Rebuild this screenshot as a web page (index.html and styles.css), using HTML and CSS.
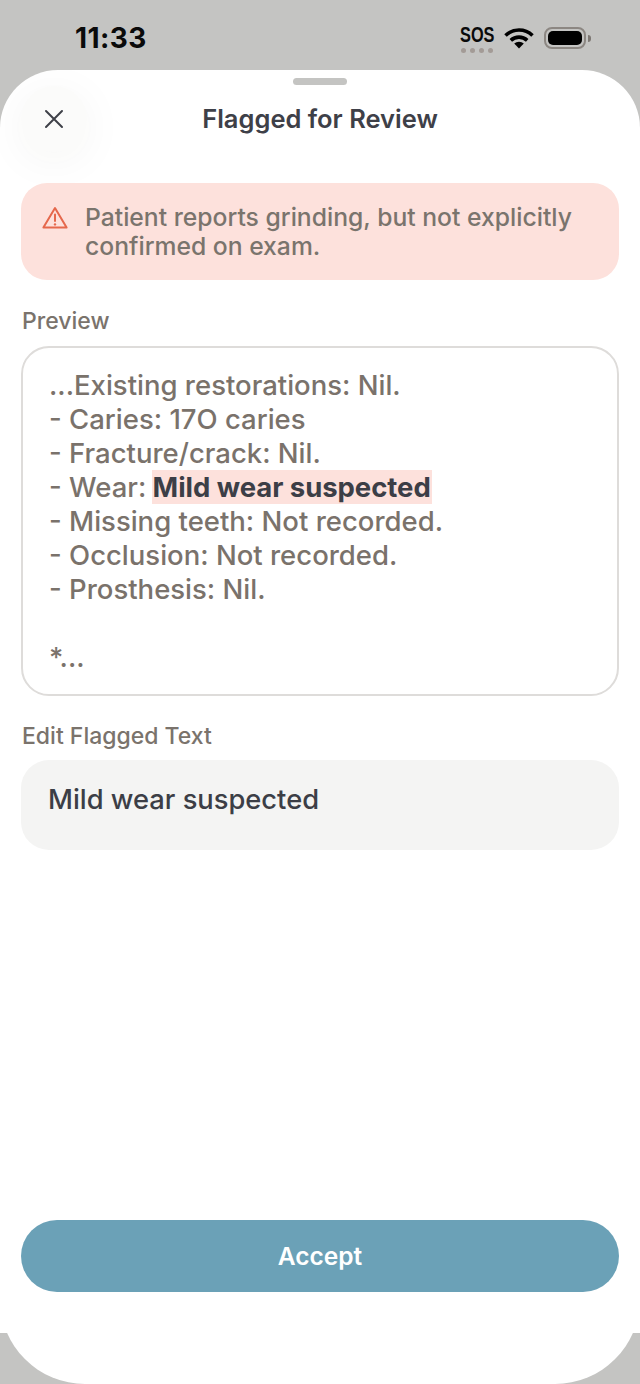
FILE: index.html
```html
<!DOCTYPE html>
<html lang="en">
<head>
<meta charset="utf-8">
<title>Flagged for Review</title>
<link rel="stylesheet" href="styles.css">
</head>
<body>
<div class="screen">
  <header class="status">
    <span class="time">11:33</span>
    <div class="status-right">
      <div class="sos">
        <span class="sos-text">SOS</span>
        <div class="sos-dots"><i></i><i></i><i></i><i></i></div>
      </div>
      <svg class="wifi" width="30" height="22" viewBox="0 0 30 22" aria-hidden="true">
        <path d="M1.5 8.5 A19.5 19.5 0 0 1 28.5 8.5" fill="none" stroke="#000" stroke-width="3.6"/>
        <path d="M6.8 13.4 A12 12 0 0 1 23.2 13.4" fill="none" stroke="#000" stroke-width="3.6"/>
        <path d="M10.2 16.6 A7 7 0 0 1 19.8 16.6 L15 21.5 Z" fill="#000"/>
      </svg>
      <div class="battery"><div class="battery-body"><div class="battery-fill"></div></div><div class="battery-cap"></div></div>
    </div>
  </header>
  <main class="sheet">
    <div class="handle"></div>
    <div class="nav">
      <button class="close" aria-label="Close">
        <svg width="22" height="22" viewBox="0 0 22 22" aria-hidden="true"><path d="M3 3 L19 19 M19 3 L3 19" stroke="#3e4048" stroke-width="2" stroke-linecap="round" fill="none"/></svg>
      </button>
      <h1 class="title">Flagged for Review</h1>
    </div>
    <div class="alert">
      <svg class="alert-icon" width="26" height="24" viewBox="0 0 26 24" aria-hidden="true">
        <path d="M13 2 L24.6 21.6 H1.4 Z" fill="none" stroke="#e5684c" stroke-width="2" stroke-linejoin="round"/>
        <path d="M13 8.5 V15" stroke="#e5684c" stroke-width="2" stroke-linecap="round"/>
        <circle cx="13" cy="18.4" r="1.2" fill="#e5684c"/>
      </svg>
      <p class="alert-text">Patient reports grinding, but not explicitly confirmed on exam.</p>
    </div>
    <div class="label label-preview">Preview</div>
    <div class="preview">
      <div>...Existing restorations: Nil.</div>
      <div>- Caries: 17O caries</div>
      <div>- Fracture/crack: Nil.</div>
      <div>- Wear: <mark class="flag">Mild wear suspected</mark></div>
      <div>- Missing teeth: Not recorded.</div>
      <div>- Occlusion: Not recorded.</div>
      <div>- Prosthesis: Nil.</div>
      <div class="blank"></div>
      <div>*...</div>
    </div>
    <div class="label label-edit">Edit Flagged Text</div>
    <div class="input">Mild wear suspected</div>
    <div class="spacer"></div>
    <button class="accept">Accept</button>
  </main>
  <div class="foot"><div class="foot-inner"></div></div>
</div>
</body>
</html>
```
FILE: styles.css
```css
* { box-sizing: border-box; }
html, body { margin: 0; padding: 0; }
body { width: 640px; height: 1384px; overflow: hidden; background: #c4c4c2; font-family: Inter, "Liberation Sans", sans-serif; }
.screen { width: 640px; height: 1384px; display: flex; flex-direction: column; }
.status { height: 70px; flex: none; display: flex; justify-content: space-between; align-items: flex-start; padding: 22px 49px 0 75px; }
.time { font-size: 28px; line-height: 32px; font-weight: 700; color: #0a0a0a; letter-spacing: 0.4px; }
.status-right { display: flex; align-items: flex-start; }
.sos { width: 36px; display: flex; flex-direction: column; align-items: center; margin-top: 3px; }
.sos-text { font-family: "Liberation Sans", sans-serif; font-weight: 700; font-size: 22px; line-height: 20px; color: #0a0a0a; transform: scaleX(0.74); white-space: nowrap; }
.sos-dots { display: flex; gap: 4px; margin-top: 3px; }
.sos-dots i { width: 5px; height: 5px; border-radius: 50%; background: #a39b96; }
.wifi { margin: 5px 0 0 9px; }
.battery { display: flex; align-items: center; margin: 5px 0 0 10px; }
.battery-body { width: 42px; height: 22px; border: 2px solid #8c8782; border-radius: 8px; padding: 2px; }
.battery-fill { width: 100%; height: 100%; background: #000; border-radius: 5px; }
.battery-cap { width: 3px; height: 7px; background: #7d7873; border-radius: 0 3px 3px 0; margin-left: 2px; }
.sheet { flex: 1; background: #fff; border-radius: 58px 58px 0 0; padding: 8px 21px 0; display: flex; flex-direction: column; position: relative; overflow: hidden; }
.handle { width: 54px; height: 7px; border-radius: 4px; background: #c4c4c2; align-self: center; flex: none; }
.nav { height: 66px; margin-top: 1px; flex: none; display: flex; align-items: center; justify-content: center; position: relative; }
.close { position: absolute; left: 0; top: 0; width: 66px; height: 66px; border-radius: 50%; border: 0; padding: 0; background: #fbfbfa; box-shadow: 0 8px 46px rgba(60, 50, 40, 0.05); display: flex; align-items: center; justify-content: center; }
.title { margin: 0; font-size: 25.5px; line-height: 32px; font-weight: 600; color: #3e4048; white-space: nowrap; }
.alert { margin-top: 31px; height: 97px; flex: none; background: #fde1dc; border-radius: 26px; display: flex; align-items: flex-start; padding: 20px 30px 0 21px; position: relative; }
.alert-icon { flex: none; margin: 3px 0 0 0; }
.alert-text { margin: 0 0 0 17px; font-size: 24.7px; line-height: 29px; font-weight: 500; color: #7a746d; }
.label { font-size: 23px; line-height: 28px; font-weight: 500; color: #7a736c; flex: none; padding-left: 1px; }
.label-preview { margin-top: 27px; }
.label-edit { margin-top: 26px; }
.preview { margin-top: 11px; height: 350px; flex: none; border: 2px solid #dedcda; border-radius: 28px; padding: 19.5px 26px 0; font-size: 27.5px; line-height: 34px; font-weight: 500; color: #7a726b; }
.blank { height: 34px; }
.flag { background: #fde1dc; color: #3c3e46; font-weight: 700; padding: 0 1px; margin-left: -2px; letter-spacing: -0.05px; }
.input { margin-top: 10px; height: 90px; flex: none; background: #f4f4f3; border-radius: 28px; padding: 0 26px 12px 27px; display: flex; align-items: center; font-size: 27.3px; font-weight: 500; color: #3c3e46; }
.spacer { flex: 1; }
.accept { height: 72px; flex: none; border: 0; border-radius: 36px; background: #6ba1b7; color: #fff; font-family: inherit; font-size: 24.5px; font-weight: 600; margin-bottom: 41px; }
.foot { height: 51px; flex: none; overflow: hidden; display: flex; align-items: flex-end; }
.foot-inner { width: 100%; height: 85px; flex: none; background: #fff; border-radius: 0 0 85px 85px; }
```
